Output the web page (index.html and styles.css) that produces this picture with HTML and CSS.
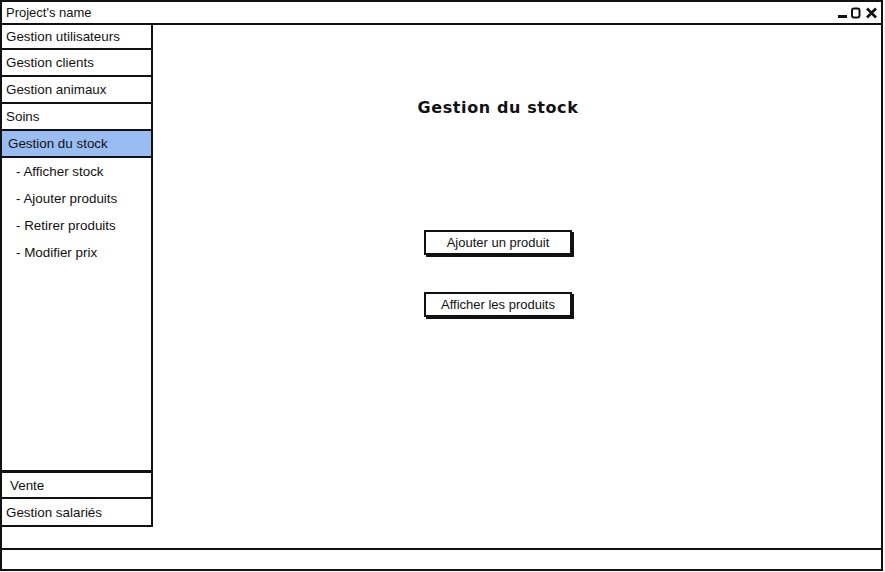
FILE: index.html
```html
<!DOCTYPE html>
<html lang="fr">
<head>
<meta charset="utf-8">
<title>Project's name</title>
<link rel="stylesheet" href="styles.css">
</head>
<body>
<div class="window">
  <div class="titlebar">
    <span class="title">Project's name</span>
    <svg class="controls" width="40" height="12" viewBox="0 0 40 12">
      <rect x="0" y="8" width="9" height="3" fill="#111"/>
      <rect x="14" y="1.5" width="7.5" height="9" rx="2" fill="none" stroke="#111" stroke-width="2"/>
      <path d="M29 1.5 L38 10.5 M38 1.5 L29 10.5" stroke="#111" stroke-width="2.6" fill="none"/>
    </svg>
  </div>
  <div class="content">
    <div class="sidebar">
      <div class="nav">
        <div class="item first">Gestion utilisateurs</div>
        <div class="item">Gestion clients</div>
        <div class="item">Gestion animaux</div>
        <div class="item">Soins</div>
        <div class="item selected">Gestion du stock</div>
        <div class="subpanel">
          <div class="subitem">- Afficher stock</div>
          <div class="subitem">- Ajouter produits</div>
          <div class="subitem">- Retirer produits</div>
          <div class="subitem">- Modifier prix</div>
        </div>
        <div class="item indent">Vente</div>
        <div class="item last">Gestion salariés</div>
      </div>
    </div>
    <div class="main">
      <h1 class="heading">Gestion du stock</h1>
      <button class="btn btn-first">Ajouter un produit</button>
      <button class="btn btn-second">Afficher les produits</button>
    </div>
  </div>
  <div class="statusbar"></div>
</div>
</body>
</html>
```

FILE: styles.css
```css
html, body {
  margin: 0;
  padding: 0;
  background: #fff;
}

body {
  font-family: "Liberation Sans", Arial, sans-serif;
  color: #111;
}

.window {
  width: 883px;
  height: 571px;
  border: 2px solid #111;
  box-sizing: border-box;
  display: flex;
  flex-direction: column;
  background: #fff;
}

.titlebar {
  height: 21px;
  border-bottom: 2px solid #111;
  display: flex;
  align-items: center;
  justify-content: space-between;
  padding: 0 3px 0 4px;
  flex: none;
}

.title {
  font-size: 13px;
}

.controls {
  display: block;
}

.content {
  flex: 1;
  display: flex;
  min-height: 0;
}

.sidebar {
  width: 151px;
  flex: none;
  display: flex;
  flex-direction: column;
  padding-bottom: 21px;
}

.nav {
  flex: 1;
  display: flex;
  flex-direction: column;
  border-right: 2px solid #111;
  border-bottom: 2px solid #111;
}

.item {
  height: 27px;
  box-sizing: border-box;
  border-bottom: 2px solid #111;
  display: flex;
  align-items: center;
  padding-left: 4px;
  font-size: 13.4px;
  flex: none;
}

.item.first {
  height: 25px;
}

.item.selected {
  background: #99bdf2;
  border: 2px solid #111;
  border-top: none;
  border-right: none;
  padding-left: 6px;
  margin-left: -2px;
}

.item.indent {
  padding-left: 8px;
  border-top: 1px solid #111;
}

.item.last {
  border-bottom: none;
  height: 26px;
}

.subpanel {
  flex: 1;
  border-bottom: 2px solid #111;
}

.subitem {
  height: 27px;
  display: flex;
  align-items: center;
  padding-left: 14px;
  font-size: 13.4px;
}

.main {
  flex: 1;
  display: flex;
  flex-direction: column;
  align-items: center;
  padding-top: 73px;
  padding-right: 38px;
}

.heading {
  margin: 0;
  line-height: 20px;
  font-weight: bold;
  font-family: "DejaVu Sans", "Liberation Sans", sans-serif;
  font-size: 16px;
  letter-spacing: 0.6px;
}

.btn {
  width: 148px;
  height: 25px;
  box-sizing: border-box;
  border: 2px solid #111;
  background: #fff;
  box-shadow: 2px 2px 0 #111;
  font-family: "Liberation Sans", Arial, sans-serif;
  font-size: 13px;
  color: #111;
  padding: 0;
  display: flex;
  align-items: center;
  justify-content: center;
}

.btn-first {
  margin-top: 112px;
}

.btn-second {
  margin-top: 37px;
}

.statusbar {
  height: 19px;
  border-top: 2px solid #111;
  flex: none;
}
```
